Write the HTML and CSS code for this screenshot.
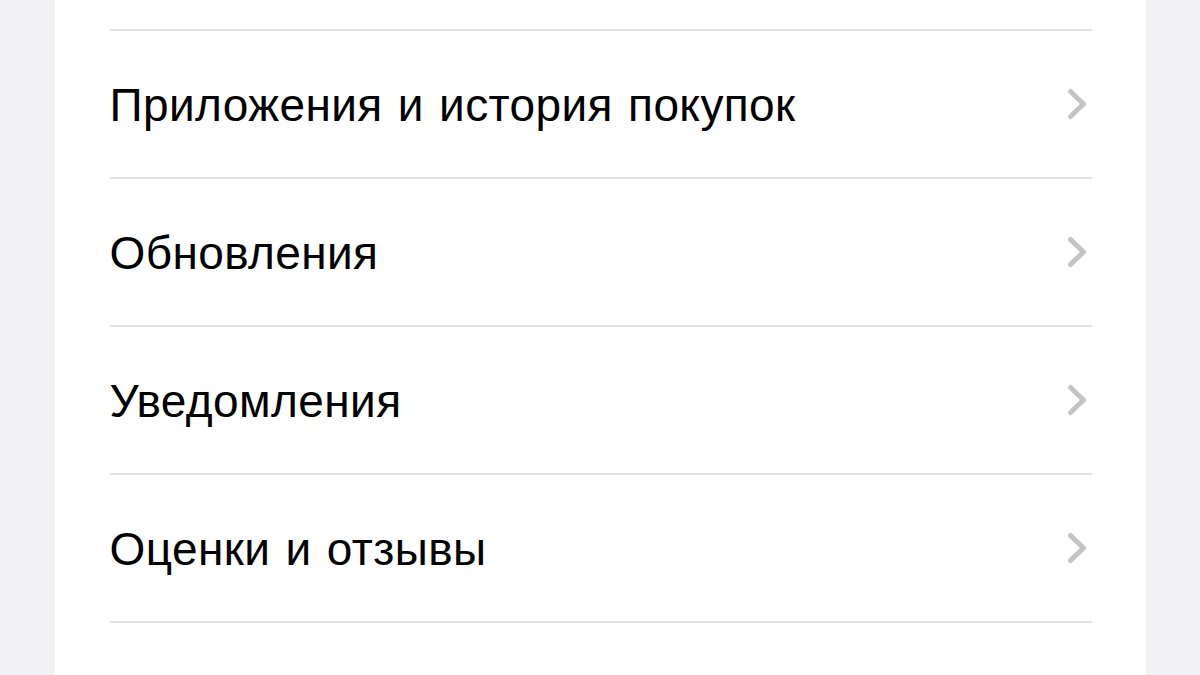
FILE: index.html
```html
<!DOCTYPE html>
<html lang="ru">
<head>
<meta charset="utf-8">
<link rel="stylesheet" href="styles.css">
</head>
<body>
<div class="page">
  <div class="card">
    <div class="sep"></div>
    <div class="row"><span class="label">Приложения и история покупок</span><svg class="chev" viewBox="0 0 20 32"><path d="M3.5 3.5 L16.5 16 L3.5 28.5"/></svg></div>
    <div class="sep"></div>
    <div class="row"><span class="label">Обновления</span><svg class="chev" viewBox="0 0 20 32"><path d="M3.5 3.5 L16.5 16 L3.5 28.5"/></svg></div>
    <div class="sep"></div>
    <div class="row"><span class="label">Уведомления</span><svg class="chev" viewBox="0 0 20 32"><path d="M3.5 3.5 L16.5 16 L3.5 28.5"/></svg></div>
    <div class="sep"></div>
    <div class="row"><span class="label">Оценки и отзывы</span><svg class="chev" viewBox="0 0 20 32"><path d="M3.5 3.5 L16.5 16 L3.5 28.5"/></svg></div>
    <div class="sep"></div>
  </div>
</div>
</body>
</html>
```
FILE: styles.css
```css
html, body {
  margin: 0;
  padding: 0;
  width: 1200px;
  height: 675px;
  overflow: hidden;
  background: #f1f1f6;
  font-family: "Liberation Sans", Arial, sans-serif;
}
.page {
  display: flex;
  justify-content: center;
  height: 675px;
}
.card {
  width: 1091px;
  background: #ffffff;
  padding: 29px 54px 0 55px;
  box-sizing: border-box;
  height: 675px;
  display: flex;
  flex-direction: column;
}
.sep {
  height: 2px;
  background: #e2e2e5;
  flex: none;
}
.row {
  height: 146px;
  flex: none;
  display: flex;
  align-items: center;
  justify-content: space-between;
  padding-right: 5px;
}
.label {
  font-size: 46px;
  letter-spacing: 0.4px;
  word-spacing: 2px;
  color: #000;
  margin-top: 2px;
}
.chev {
  width: 20px;
  height: 32px;
}
.chev path {
  fill: none;
  stroke: #c4c4c8;
  stroke-width: 5;
  stroke-linecap: round;
  stroke-linejoin: round;
}
```
